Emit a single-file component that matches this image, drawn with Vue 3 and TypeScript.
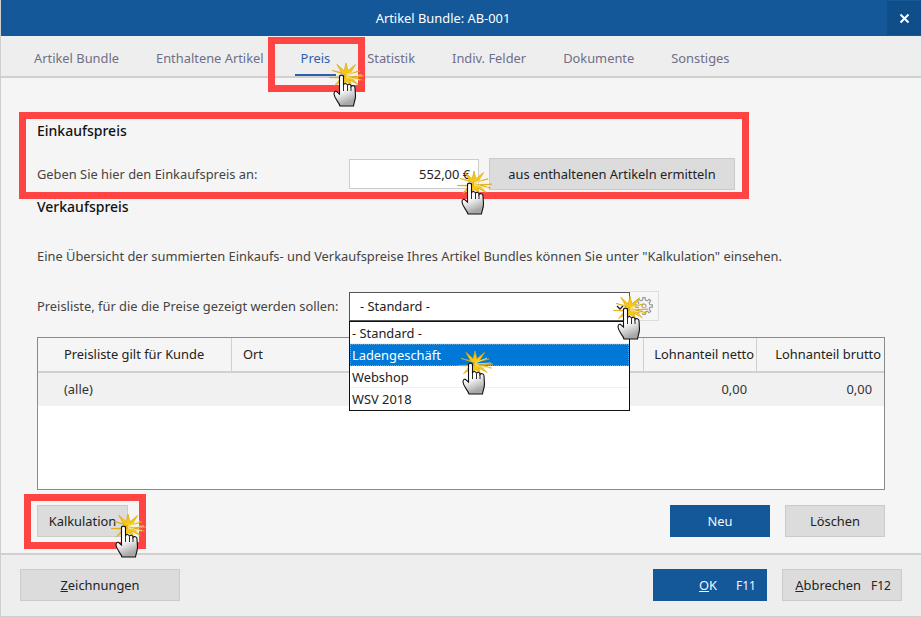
<script setup lang="ts">
interface Spot { x: number; y: number }
interface Box { x: number; y: number; w: number; h: number }

const tabs: string[] = ['Artikel Bundle', 'Enthaltene Artikel', 'Preis', 'Statistik', 'Indiv. Felder', 'Dokumente', 'Sonstiges']
const options: string[] = ['- Standard -', 'Ladengeschäft', 'Webshop', 'WSV 2018']
const redBoxes: Box[] = [
  { x: 267, y: 37, w: 97, h: 55 },
  { x: 18, y: 112, w: 730, h: 87 },
  { x: 23, y: 494, w: 122, h: 55 },
]
const hands: Spot[] = [
  { x: 328, y: 63 },
  { x: 456, y: 171 },
  { x: 612, y: 296 },
  { x: 457, y: 351 },
  { x: 110, y: 514 },
]

const spikes: [number, number][] = [
  [0, 18], [14, 17], [-20, 15], [-50, 15], [-90, 13], [-128, 15], [-158, 15], [175, 17], [140, 15], [110, 12], [60, 11], [35, 15],
]
const burst: string = spikes
  .flatMap(([deg, r], i) => {
    const a = (deg * Math.PI) / 180
    const next = (((spikes[(i + 1) % spikes.length][0] + 360) % 360) + ((deg + 360) % 360)) / 2
    const b = ((Math.abs(spikes[(i + 1) % spikes.length][0] - deg) > 180 ? next + 180 : next) * Math.PI) / 180
    return [
      `${(17 + r * Math.cos(a)).toFixed(1)},${(13 + r * Math.sin(a)).toFixed(1)}`,
      `${(17 + 5.5 * Math.cos(b)).toFixed(1)},${(13 + 5.5 * Math.sin(b)).toFixed(1)}`,
    ]
  })
  .join(' ')

const gear: string = (() => {
  const pts: string[] = []
  const teeth = 8
  for (let i = 0; i < teeth; i++) {
    const base = (i * 2 * Math.PI) / teeth
    const step = (2 * Math.PI) / teeth
    const seq: [number, number][] = [[-0.3, 6], [-0.17, 8.4], [0.17, 8.4], [0.3, 6]]
    for (const [f, r] of seq) {
      const a = base + f * step
      pts.push(`${(10 + r * Math.cos(a)).toFixed(2)} ${(10 + r * Math.sin(a)).toFixed(2)}`)
    }
  }
  return 'M' + pts.join(' L') + ' Z'
})()
</script>

<template>
  <div class="win">
    <header class="title">
      <span class="title-text">Artikel Bundle: AB-001</span>
      <button class="close" type="button" aria-label="Schließen">
        <svg width="11" height="11" viewBox="0 0 11 11"><path d="M1.5 1.5 L9.5 9.5 M9.5 1.5 L1.5 9.5" stroke="#fff" stroke-width="2" /></svg>
      </button>
    </header>

    <nav class="tabs">
      <a v-for="t in tabs" :key="t" class="tab" :class="{ active: t === 'Preis' }">{{ t }}</a>
    </nav>

    <main class="content">
      <h2 class="h first">Einkaufspreis</h2>
      <div class="row buy">
        <label class="lbl">Geben Sie hier den Einkaufspreis an:</label>
        <div class="input">552,00 €</div>
        <button class="btn calc" type="button">aus enthaltenen Artikeln ermitteln</button>
      </div>
      <h2 class="h second">Verkaufspreis</h2>
      <p class="info">Eine Übersicht der summierten Einkaufs- und Verkaufspreise Ihres Artikel Bundles können Sie unter "Kalkulation" einsehen.</p>
      <div class="row pick">
        <label class="lbl">Preisliste, für die die Preise gezeigt werden sollen:</label>
        <div class="select">
          <span>- Standard -</span>
          <svg class="chev" width="8" height="5" viewBox="0 0 8 5"><path d="M1 1 L4 4 L7 1" fill="none" stroke="#222" stroke-width="1.4" /></svg>
          <ul class="drop">
            <li v-for="(o, i) in options" :key="o" :class="{ sel: i === 1 }">{{ o }}</li>
          </ul>
        </div>
        <button class="gear" type="button" aria-label="Einstellungen">
          <svg width="20" height="20" viewBox="0 0 20 20">
            <path :d="gear" fill="#f6f6f6" stroke="#9a9a9a" stroke-width="1.2" />
            <circle cx="10" cy="10" r="2" fill="none" stroke="#9a9a9a" stroke-width="1.1" />
          </svg>
        </button>
      </div>

      <section class="table">
        <div class="thead">
          <div class="th c1">Preisliste gilt für Kunde</div>
          <div class="th c2">Ort</div>
          <div class="th c3">Lohnanteil netto</div>
          <div class="th c4">Lohnanteil brutto</div>
        </div>
        <div class="trow">
          <div class="td c1">(alle)</div>
          <div class="td c2"></div>
          <div class="td c3">0,00</div>
          <div class="td c4">0,00</div>
        </div>
      </section>

      <div class="actions">
        <button class="btn kalk" type="button">Kalkulation</button>
        <span class="grow"></span>
        <button class="btn primary w100" type="button">Neu</button>
        <button class="btn w100" type="button">Löschen</button>
      </div>
    </main>

    <footer class="foot">
      <button class="btn zeich" type="button"><u>Z</u>eichnungen</button>
      <span class="grow"></span>
      <button class="btn primary ok" type="button"><span><u>O</u>K</span><span class="key">F11</span></button>
      <button class="btn abbr" type="button"><span><u>A</u>bbrechen</span><span class="key">F12</span></button>
    </footer>

    <div v-for="(b, i) in redBoxes" :key="'r' + i" class="red" :style="{ left: b.x + 'px', top: b.y + 'px', width: b.w + 'px', height: b.h + 'px' }"></div>

    <svg v-for="(h, i) in hands" :key="'h' + i" class="hand" :style="{ left: h.x + 'px', top: h.y + 'px' }" width="36" height="44" viewBox="0 0 36 44">
      <defs>
        <linearGradient :id="'g' + i" x1="0" y1="0" x2="0.3" y2="1">
          <stop offset="0.55" stop-color="#ffffff" />
          <stop offset="1" stop-color="#a8a8a8" />
        </linearGradient>
      </defs>
      <polygon :points="burst" fill="#f7c815" stroke="#dba70a" stroke-width="0.7" />
      <path d="M17 13 L33 12 M17 14 L31 17 M17 12 L29 7" stroke="#fdf0b0" stroke-width="0.8" fill="none" />
      <path
        d="M10.5 14 C10.5 11.5 14.5 11.5 14.5 14 L14.5 22 C15 20 18 20 18.5 22.5 C19 20.5 22 21 22 23.5 C23 22 26 22.5 26 25 L26.5 33 C26.5 37 25 39 24.5 43 L11 43 C10 39 5.5 36 5 31 C5 28 7.5 27.5 8 29 L10.5 31 Z"
        :fill="'url(#g' + i + ')'"
        stroke="#111"
        stroke-width="1.1"
      />
      <path d="M14.5 22 L14.5 28 M18.5 22.5 L18.5 28 M22 23.5 L22 28" stroke="#111" stroke-width="0.9" fill="none" />
    </svg>
  </div>
</template>

<style>
html, body { margin: 0; padding: 0; }
</style>

<style scoped>
.win {
  position: relative;
  width: 922px;
  height: 617px;
  box-sizing: border-box;
  display: flex;
  flex-direction: column;
  overflow: hidden;
  background: #f5f5f5;
  border-left: 1px solid #cfcfcf;
  border-right: 1px solid #cfcfcf;
  border-bottom: 1px solid #cfcfcf;
  font-family: "Noto Sans", "Open Sans", sans-serif;
  font-size: 12.87px;
  color: #333;
}
button { font: inherit; cursor: default; }
.title {
  height: 36px;
  margin: 0 -1px;
  flex: none;
  background: #14589a;
  color: #fff;
  display: flex;
  align-items: center;
  justify-content: center;
  position: relative;
  padding-right: 36px;
}
.close {
  position: absolute;
  right: 0;
  top: 1px;
  width: 35px;
  height: 34px;
  border: 0;
  padding: 0;
  background: #104e8a;
  display: flex;
  align-items: center;
  justify-content: center;
}
.tabs {
  height: 42px;
  flex: none;
  box-sizing: border-box;
  background: #eeeeee;
  border-bottom: 2px solid #d0d0d0;
  display: flex;
  gap: 25px;
  padding-left: 27px;
}
.tab {
  padding: 0 6px;
  line-height: 44px;
  height: 40px;
  box-sizing: content-box;
  color: #6f6f88;
  white-space: nowrap;
  position: relative;
}
.tab.active { color: #2f5fae; }
.tab.active::after {
  content: "";
  position: absolute;
  left: 0;
  right: 0;
  bottom: 0;
  height: 2px;
  background: #2f5fae;
}
.content {
  flex: 1;
  min-height: 0;
  padding: 0 36px;
  display: flex;
  flex-direction: column;
}
.h {
  margin: 0;
  font-size: 14px;
  font-weight: 500;
  color: #111;
  line-height: 20px;
}
.first { margin-top: 43px; }
.second { margin-top: 7px; }
.row { display: flex; align-items: center; }
.lbl { color: #444; white-space: nowrap; }
.buy { margin-top: 17px; height: 32px; }
.buy .lbl { width: 312px; }
.input {
  width: 130px;
  height: 30px;
  box-sizing: border-box;
  background: #fff;
  border: 1px solid #cccccc;
  line-height: 28px;
  text-align: right;
  padding-right: 8px;
  color: #222;
}
.btn {
  height: 32px;
  box-sizing: border-box;
  background: #dcdcdc;
  border: 1px solid #cbcbcb;
  color: #222;
  padding: 0;
  white-space: nowrap;
}
.calc { width: 246px; margin-left: 10px; }
.info { margin: 29px 0 0; line-height: 20px; color: #444; white-space: nowrap; }
.pick { margin-top: 25px; height: 30px; }
.pick .lbl { width: 312px; }
.select {
  position: relative;
  width: 281px;
  height: 29px;
  box-sizing: border-box;
  background: #fff;
  border: 1px solid #555;
  line-height: 27px;
  padding-left: 10px;
  color: #222;
  z-index: 2;
}
.chev { position: absolute; right: 5px; top: 12px; }
.drop {
  list-style: none;
  margin: 0;
  padding: 0;
  position: absolute;
  left: -1px;
  top: 28px;
  width: 281px;
  box-sizing: border-box;
  height: 90px;
  background: #fff;
  border: 1px solid #111;
}
.drop li {
  height: 22px;
  line-height: 22px;
  padding-left: 2px;
  box-sizing: border-box;
  border-bottom: 1px solid #f0f0f0;
  color: #222;
}
.drop li.sel {
  background: #0078d7;
  color: #fff;
  border: 1px dotted #5fa8e0;
  line-height: 20px;
  padding-left: 1px;
}
.drop li:last-child { border-bottom: 0; }
.gear {
  width: 29px;
  height: 30px;
  box-sizing: border-box;
  background: #f6f6f6;
  border: 1px solid #dddddd;
  border-left: 0;
  padding: 0;
  display: flex;
  align-items: center;
  justify-content: center;
}
.table {
  margin-top: 16px;
  height: 153px;
  flex: none;
  box-sizing: border-box;
  background: #fff;
  border: 1px solid #8a8a8a;
}
.thead, .trow {
  display: grid;
  grid-template-columns: 194px 412px 113px 127px;
}
.thead {
  height: 35px;
  box-sizing: border-box;
  background: #f5f5f5;
  border-bottom: 2px solid #d0d0d0;
}
.trow { height: 33px; background: #f1f1f1; }
.th {
  line-height: 33px;
  color: #222;
  border-right: 1px solid #d0d0d0;
  white-space: nowrap;
  box-sizing: border-box;
}
.td { line-height: 33px; color: #333; box-sizing: border-box; }
.c1 { padding-left: 26px; }
.c2 { padding-left: 11px; }
.th.c3, .th.c4 { text-align: right; padding-right: 2px; }
.th.c4 { border-right: 0; padding-right: 3px; }
.td.c3 { text-align: right; padding-right: 10px; }
.td.c4 { text-align: right; padding-right: 12px; }
.actions { display: flex; gap: 15px; margin-top: 15px; }
.grow { flex: 1; }
.kalk { width: 91px; }
.w100 { width: 100px; }
.primary { background: #14589a; border-color: #14589a; color: #f2f6fb; }
.foot {
  height: 63px;
  flex: none;
  box-sizing: border-box;
  background: #eeeeee;
  border-top: 2px solid #d0d0d0;
  display: flex;
  align-items: flex-start;
  padding: 14px 19px 0;
  gap: 15px;
}
.zeich { width: 160px; }
.ok { width: 114px; display: flex; align-items: center; justify-content: flex-end; gap: 19px; padding-right: 10px; }
.abbr { width: 120px; display: flex; align-items: center; justify-content: flex-end; gap: 10px; padding-right: 10px; }
.key { font-size: 12px; }
.red {
  position: absolute;
  box-sizing: border-box;
  border: 7px solid #ff4444;
  pointer-events: none;
  z-index: 3;
}
.hand { position: absolute; pointer-events: none; z-index: 4; }
</style>
